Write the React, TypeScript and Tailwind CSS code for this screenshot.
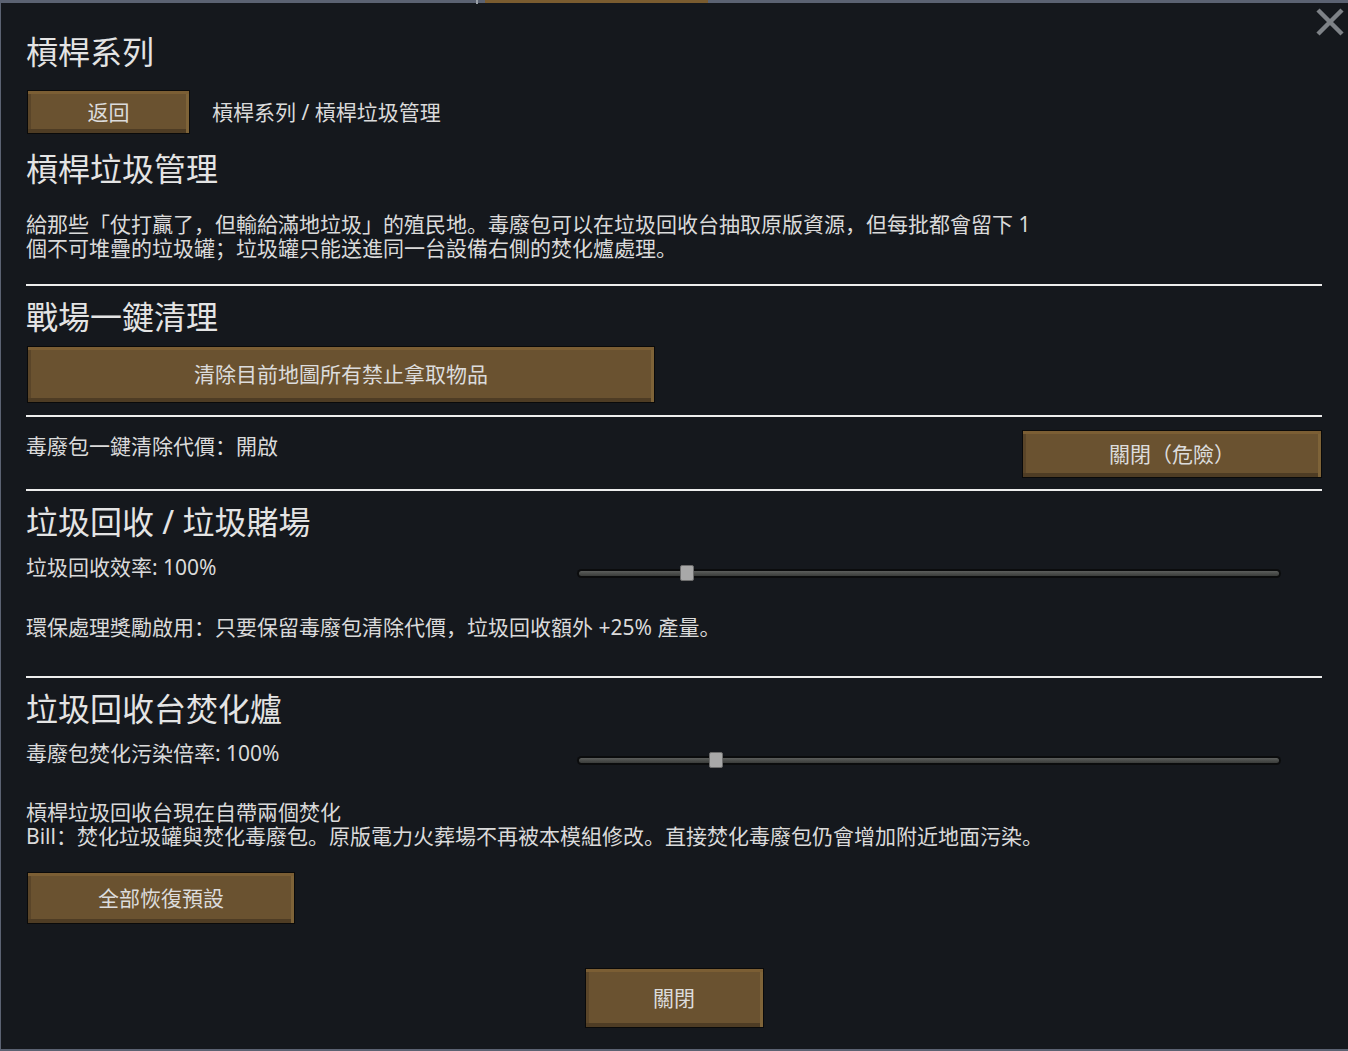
import React from 'react';

const FONT = "font-['Noto_Sans','Noto_Sans_CJK_SC',sans-serif]";

function WoodButton({ label, className }: { label: string; className: string }) {
    return (
        <button
            className={`${className} flex items-center justify-center border border-[#0a0a0a] bg-[#6a5230] text-[21px] leading-none text-[#dcdcdc] shadow-[inset_0_3px_0_#7b5e34,inset_-3px_0_0_#7e6338,inset_0_-4px_0_#4e3c24,inset_3px_0_0_#5a4529]`}
        >
            {label}
        </button>
    );
}

function Slider({ thumb }: { thumb: number }) {
    return (
        <div className="relative h-[9px] w-[704px] rounded-full bg-[#0b0c0d] p-[2px]">
            <div className="h-full w-full rounded-full bg-gradient-to-b from-[#5c5e5c] to-[#3a3c3a]" />
            <div
                className="absolute top-[-4px] h-[16px] w-[14px] rounded-[2px] border border-[#6c6c6c] bg-[#a8a8a8]"
                style={{ left: thumb }}
            />
        </div>
    );
}

function Divider() {
    return <div className="h-[2px] w-full bg-[#ededed]" />;
}

function Heading({ text, className }: { text: string; className: string }) {
    return <h2 className={`${className} h-[36px] text-[32px] leading-[36px] text-[#e4e4e4]`}>{text}</h2>;
}

export default function App() {
    return (
        <div className={`${FONT} relative h-[1051px] w-[1348px] border-t-[3px] border-b-2 border-l border-[#5b6272] bg-[#15181d] text-[#dadada]`}>
            {/* tab peeking over the top edge */}
            <div className="absolute left-[475px] top-[-3px] h-[4px] w-[2px] bg-[#9aa0a8]" />
            <div className="absolute left-[484px] top-[-3px] h-[3px] w-[223px] bg-[#7a5c30]" />

            <button className="absolute right-[4px] top-[5px] text-[#7e8287]">
                <svg width="28" height="28" viewBox="0 0 28 28">
                    <path d="M2 2 L26 26 M26 2 L2 26" stroke="currentColor" strokeWidth="4.5" strokeLinecap="butt" />
                </svg>
            </button>

            <div className="flex flex-col pl-[25px] pr-[26px] pt-[31px]">
                <Heading text="槓桿系列" className="" />

                <div className="mt-[20px] flex items-center gap-[22px]">
                    <WoodButton label="返回" className="ml-[1px] h-[44px] w-[163px]" />
                    <span className="text-[21px] leading-[24px]">槓桿系列 / 槓桿垃圾管理</span>
                </div>

                <Heading text="槓桿垃圾管理" className="mt-[17px]" />

                <p className="mt-[25px] w-[1016px] text-[21px] leading-[24px]">
                    給那些「仗打贏了，但輸給滿地垃圾」的殖民地。毒廢包可以在垃圾回收台抽取原版資源，但每批都會留下 1 個不可堆疊的垃圾罐；垃圾罐只能送進同一台設備右側的焚化爐處理。
                </p>

                <div className="mt-[24px]">
                    <Divider />
                </div>

                <Heading text="戰場一鍵清理" className="mt-[13px]" />

                <WoodButton label="清除目前地圖所有禁止拿取物品" className="ml-[1px] mt-[11px] h-[57px] w-[628px]" />

                <div className="mt-[12px]">
                    <Divider />
                </div>

                <div className="mt-[13px] flex items-start justify-between">
                    <span className="mt-[4px] text-[21px] leading-[24px]">毒廢包一鍵清除代價：開啟</span>
                    <WoodButton label="關閉（危險）" className="h-[48px] w-[300px]" />
                </div>

                <div className="mt-[11px]">
                    <Divider />
                </div>

                <Heading text="垃圾回收 / 垃圾賭場" className="mt-[13px]" />

                <div className="mt-[15px] flex items-start">
                    <span className="w-[551px] text-[21px] leading-[24px]">垃圾回收效率: 100%</span>
                    <div className="mt-[14px]">
                        <Slider thumb={103} />
                    </div>
                </div>

                <p className="mt-[36px] text-[21px] leading-[24px]">
                    環保處理獎勵啟用：只要保留毒廢包清除代價，垃圾回收額外 +25% 產量。
                </p>

                <div className="mt-[37px]">
                    <Divider />
                </div>

                <Heading text="垃圾回收台焚化爐" className="mt-[13px]" />

                <div className="mt-[14px] flex items-start">
                    <span className="w-[551px] text-[21px] leading-[24px]">毒廢包焚化污染倍率: 100%</span>
                    <div className="mt-[15px]">
                        <Slider thumb={132} />
                    </div>
                </div>

                <div className="mt-[35px] flex flex-col text-[21px] leading-[24px]">
                    <span>槓桿垃圾回收台現在自帶兩個焚化</span>
                    <span>Bill：焚化垃圾罐與焚化毒廢包。原版電力火葬場不再被本模組修改。直接焚化毒廢包仍會增加附近地面污染。</span>
                </div>

                <WoodButton label="全部恢復預設" className="ml-[1px] mt-[24px] h-[52px] w-[268px]" />

                <div className="mt-[44px] flex justify-center">
                    <WoodButton label="關閉" className="h-[60px] w-[179px]" />
                </div>
            </div>
        </div>
    );
}
